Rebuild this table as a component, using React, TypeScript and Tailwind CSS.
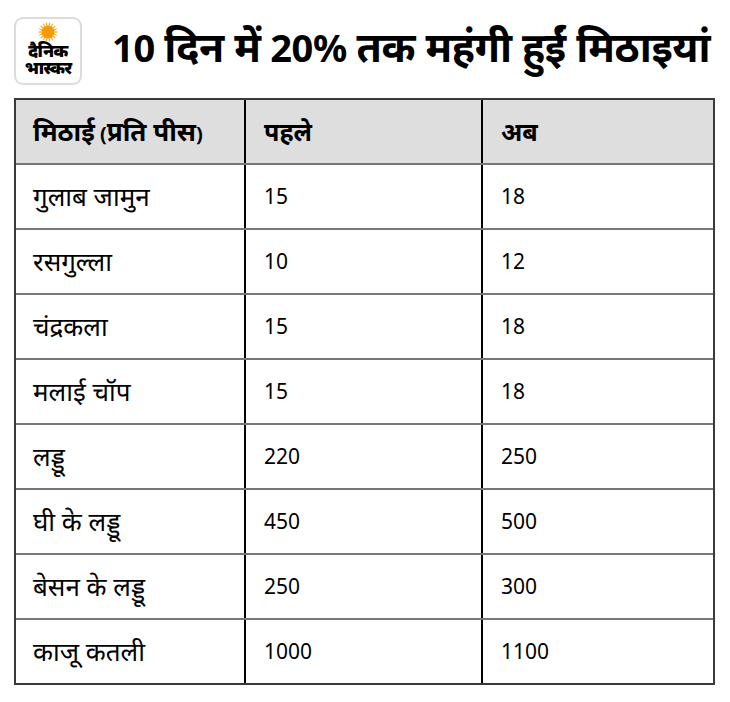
import React from "react";

const rows: [string, string, string][] = [
  ["गुलाब जामुन", "15", "18"],
  ["रसगुल्ला", "10", "12"],
  ["चंद्रकला", "15", "18"],
  ["मलाई चॉप", "15", "18"],
  ["लड्डू", "220", "250"],
  ["घी के लड्डू", "450", "500"],
  ["बेसन के लड्डू", "250", "300"],
  ["काजू कतली", "1000", "1100"],
];

function Mix({ text, dev }: { text: string; dev: string }) {
  const parts = text.split(/([\u0900-\u097F][\u0900-\u097F\u200C\u200D ]*[\u0900-\u097F]|[\u0900-\u097F])/);
  return (
    <>
      {parts.map((p, i) =>
        /[\u0900-\u097F]/.test(p) ? (
          <span key={i} className={dev}>
            {p}
          </span>
        ) : (
          <span key={i}>{p}</span>
        )
      )}
    </>
  );
}

function Sun() {
  const rays = Array.from({ length: 18 }, (_, i) => i * (360 / 18));
  return (
    <svg width="20" height="20" viewBox="0 0 20 20">
      {rays.map((a) => (
        <line
          key={a}
          x1="10"
          y1="10"
          x2={10 + 9.5 * Math.cos((a * Math.PI) / 180)}
          y2={10 + 9.5 * Math.sin((a * Math.PI) / 180)}
          stroke="#f9b233"
          strokeWidth="1.3"
        />
      ))}
      <circle cx="10" cy="10" r="6.5" fill="#f59b0b" />
    </svg>
  );
}

export default function App() {
  return (
    <div
      className="w-[730px] h-[702px] bg-white text-black"
      style={{ fontFamily: '"Noto Sans", "Noto Sans Devanagari", sans-serif' }}
    >
      <div className="flex items-center pl-[14px] pt-[17px] h-[85px]">
        <div className="w-[68px] h-[68px] rounded-[9px] border-2 border-[#dcdcdc] flex flex-col items-center pt-[3px]">
          <Sun />
          <div className="text-[17px] font-black leading-[17px] tracking-[-0.6px]">दैनिक</div>
          <div className="text-[17px] font-black leading-[17px] tracking-[-0.8px]">भास्कर</div>
        </div>
        <div className="ml-[30px] text-[38px] font-bold leading-none -mt-[9px] tracking-[-0.35px] whitespace-nowrap">
          <Mix text="10 दिन में 20% तक महंगी हुईं मिठाइयां" dev="text-[41px]" />
        </div>
      </div>
      <div className="ml-[14px] mt-[13px] w-[701px] border-2 border-[#3a3a3a]">
        <div className="grid grid-cols-[230px_237px_1fr] h-[63px] bg-[#dedede] text-[20px] font-bold">
          <div className="flex items-center pl-[17px] border-r-2 border-black whitespace-nowrap">
            <div>
              <Mix text="मिठाई (प्रति पीस)" dev="text-[26px]" />
            </div>
          </div>
          <div className="flex items-center pl-[18px] border-r-2 border-black text-[25px]">पहले</div>
          <div className="flex items-center pl-[18px] text-[25px]">अब</div>
        </div>
        {rows.map(([a, b, c]) => (
          <div
            key={a}
            className="grid grid-cols-[230px_237px_1fr] h-[65px] border-t-2 border-[#777] text-[21px]"
          >
            <div className="flex items-center pl-[17px] border-r-2 border-black text-[26px]">{a}</div>
            <div className="flex items-center pl-[18px] border-r-2 border-black">{b}</div>
            <div className="flex items-center pl-[18px]">{c}</div>
          </div>
        ))}
      </div>
    </div>
  );
}
